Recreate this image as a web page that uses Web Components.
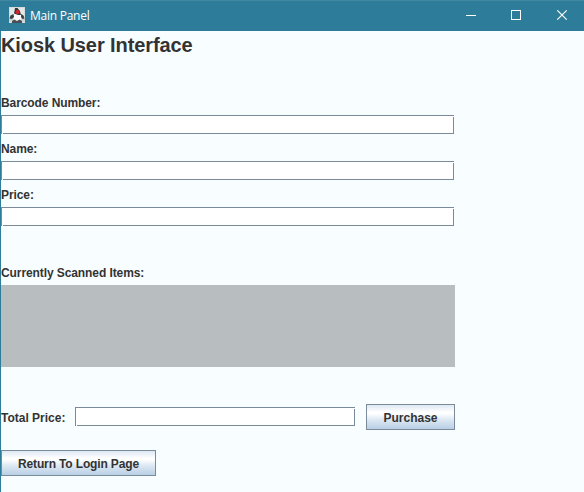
<!DOCTYPE html>
<html lang="en">
<head>
<meta charset="utf-8">
<title>Main Panel</title>
<style>
html, body { margin: 0; width: 584px; height: 492px; overflow: hidden; }
</style>
</head>
<body>
<kiosk-window></kiosk-window>
<script>
const define = (name, html) => customElements.define(name, class extends HTMLElement {
  constructor() {
    super();
    const t = document.createElement('template');
    t.innerHTML = html;
    this.attachShadow({ mode: 'open' }).append(t.content.cloneNode(true));
  }
});

define('title-bar', `
<style>
:host { display: flex; align-items: center; box-sizing: border-box; height: 31px; padding-left: 9px; background: #2d7d9a; border-top: 1px solid #4088a2; color: #fff; font: 12px/16px "Open Sans", "Noto Sans", sans-serif; }
.name { flex: 1; margin-left: 5px; letter-spacing: -0.25px; }
.controls { display: flex; width: 136px; height: 30px; }
svg { display: block; }
.duke { margin-top: -2px; }
</style>
<svg class="duke" width="16" height="16" viewBox="0 0 16 16">
  <rect width="16" height="16" fill="#d6dadd"/>
  <rect y="1" x="1" width="14" height="8" fill="#e4e7e9"/>
  <path d="M6 1.500 L8 1 L10.500 3 L12 7 L12 12 L11 14 L5 14 L4.500 9 L5 5Z" fill="#fbfbfb"/>
  <path d="M6 1 L8.500 1 L11 4 L12 8 L9 8 L5 6.500Z" fill="#34373a"/>
  <path d="M4.500 7 L1.500 8.500 L0.500 11.500 L3 12 L5 10Z M12 7 L14.500 8.500 L15.500 11.500 L13.500 12 L12 10Z" fill="#3a3f43"/>
  <path d="M0 12H4V14H0Z M13 12H16V14H13Z" fill="#c9ced1"/>
  <path d="M3 14 L5.500 12.500 L8 14 L10.500 12.500 L13 14 L13 16 H3Z" fill="#484e53"/>
  <circle cx="8.500" cy="5" r="2" fill="#d8232a"/>
</svg>
<span class="name"><slot></slot></span>
<svg class="controls" width="136" height="30" viewBox="0 0 136 30" fill="none" stroke="#fff">
  <path d="M18 14.5H28" />
  <rect x="63.500" y="9.500" width="9" height="9"/>
  <path d="M109.300 9.300L118.700 18.700M118.700 9.300L109.300 18.700" stroke-width="1.200"/>
</svg>`);

define('text-label', `
<style>
:host { display: block; height: 16px; font: bold 12px/16px "Liberation Sans", Arial, sans-serif; color: #333; white-space: nowrap; }
</style><slot></slot>`);

define('text-field', `
<style>
:host { display: block; box-sizing: border-box; height: 19px; width: 453px; background:
  linear-gradient(#f8fdff, #f8fdff) 100% 1px / 1px 1px no-repeat,
  linear-gradient(#f8fdff, #f8fdff) 1px 100% / 1px 1px no-repeat,
  linear-gradient(#7a8a99, #7a8a99) 0 0 / 100% 1px no-repeat,
  linear-gradient(#7a8a99, #7a8a99) 0 0 / 1px 100% no-repeat,
  linear-gradient(#7a8a99, #7a8a99) 100% 0 / 1px 100% no-repeat,
  linear-gradient(#7a8a99, #7a8a99) 0 100% / 100% 1px no-repeat, #fff; }
</style>`);

define('push-button', `
<style>
:host { display: flex; box-sizing: border-box; height: 26px; align-items: center; justify-content: center; border: 1px solid #7a8a99; background: linear-gradient(#dde8f3 0%, #fff 30%, #fff 35%, #dce7f2 62%, #b8cfe5 100%); font: bold 12px/16px "Liberation Sans", Arial, sans-serif; color: #333; white-space: nowrap; }
</style><slot></slot>`);

define('scan-list', `
<style>
:host { display: block; width: 454px; height: 82px; background: #b8bdc0; }
</style>`);

define('kiosk-window', `
<style>
:host { display: block; height: 492px; background: #f8fdff; }
main { display: flex; flex-direction: column; height: 461px; box-sizing: border-box; border-left: 1px solid #2d7d9a; }
h1 { margin: 0 0 36px; padding-top: 2px; height: 26px; box-sizing: border-box; font: bold 20px/24px "Liberation Sans", Arial, sans-serif; letter-spacing: -0.09px; color: #333; white-space: nowrap; }
.fields { display: grid; row-gap: 7px; padding-top: 2px; }
.field { display: grid; row-gap: 4px; grid-template-rows: 16px 19px; }
.field text-label, .scanned text-label { letter-spacing: -0.09px; }
.scanned { margin-top: 39px; }
.scanned scan-list { margin-top: 4px; }
.total { display: flex; align-items: center; height: 26px; margin-top: 37px; }
.total text-label { width: 74px; margin-top: 2px; }
.total text-field { width: 280px; margin-bottom: 1px; }
.total push-button { width: 89px; margin-left: 11px; padding-top: 1px; }
.back { width: 155px; margin-top: 20px; padding-top: 1px; letter-spacing: -0.14px; }
</style>
<title-bar>Main Panel</title-bar>
<main>
  <h1>Kiosk User Interface</h1>
  <section class="fields">
    <div class="field"><text-label>Barcode Number:</text-label><text-field></text-field></div>
    <div class="field"><text-label>Name:</text-label><text-field></text-field></div>
    <div class="field"><text-label>Price:</text-label><text-field></text-field></div>
  </section>
  <section class="scanned"><text-label>Currently Scanned Items:</text-label><scan-list></scan-list></section>
  <section class="total"><text-label>Total Price:</text-label><text-field></text-field><push-button>Purchase</push-button></section>
  <push-button class="back">Return To Login Page</push-button>
</main>`);
</script>
</body>
</html>
